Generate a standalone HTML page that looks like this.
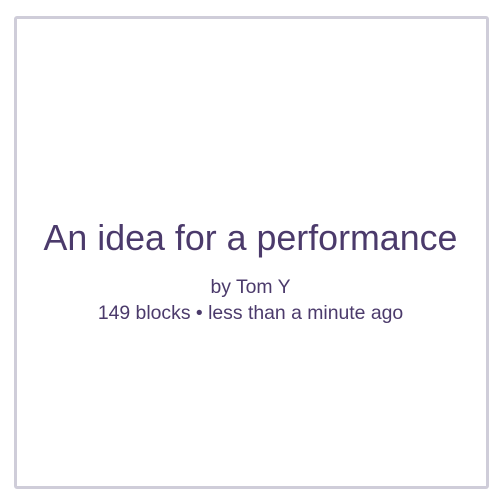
<!DOCTYPE html>
<html><head><style>
html,body{margin:0;padding:0;background:#fff;width:503px;height:504px;overflow:hidden}
.box{position:absolute;left:14px;top:16px;width:469px;height:467px;border:3px solid #cfcdd9;border-radius:3px;background:#fff}
.t{position:absolute;left:-1px;width:503px;text-align:center;font-family:"Liberation Sans",sans-serif;color:#4b3a6b;white-space:nowrap}
</style></head><body>
<div class="box"></div>
<div class="t" style="top:215px;font-size:35.8px;line-height:46px">An idea for a performance</div>
<div class="t" style="top:275px;font-size:19.4px;line-height:24px">by Tom Y</div>
<div class="t" style="top:301px;font-size:19.4px;line-height:24px">149 blocks • less than a minute ago</div>
</body></html>
